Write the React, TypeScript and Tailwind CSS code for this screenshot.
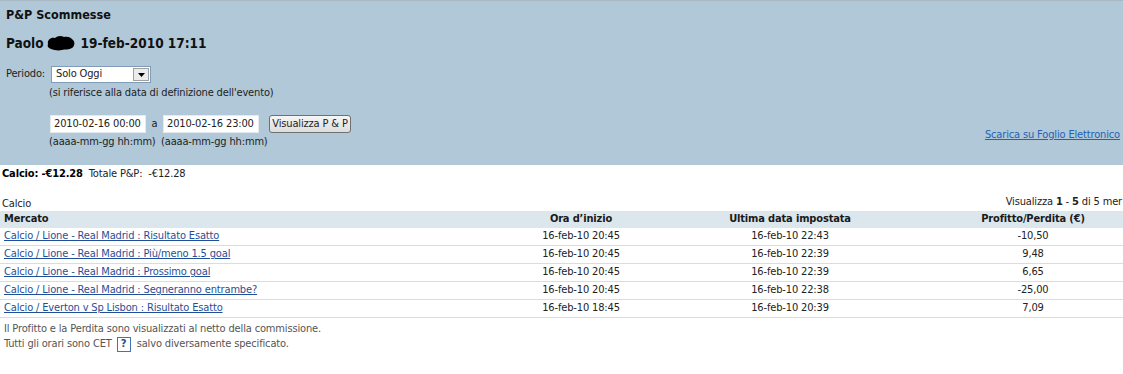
const rows = [
  { m: "Calcio / Lione - Real Madrid : Risultato Esatto", a: "16-feb-10 20:45", b: "16-feb-10 22:43", p: "-10,50" },
  { m: "Calcio / Lione - Real Madrid : Più/meno 1.5 goal", a: "16-feb-10 20:45", b: "16-feb-10 22:39", p: "9,48" },
  { m: "Calcio / Lione - Real Madrid : Prossimo goal", a: "16-feb-10 20:45", b: "16-feb-10 22:39", p: "6,65" },
  { m: "Calcio / Lione - Real Madrid : Segneranno entrambe?", a: "16-feb-10 20:45", b: "16-feb-10 22:38", p: "-25,00" },
  { m: "Calcio / Everton v Sp Lisbon : Risultato Esatto", a: "16-feb-10 18:45", b: "16-feb-10 20:39", p: "7,09" },
];

function Blob() {
  return (
    <svg width="30" height="16" viewBox="0 0 30 16" className="mx-[2px]">
      <path
        d="M2 9 C1 5 5 2 9 3 C11 1 15 0 18 2 C21 1 25 2 27 5 C29 7 29 11 26 13 C23 15 19 14 16 15 C12 16 8 15 5 14 C2 13 1 11 2 9 Z"
        fill="#000"
      />
    </svg>
  );
}

export default function App() {
  return (
    <div className="w-[1123px] h-[374px] overflow-hidden bg-white text-[11px] tracking-[-0.15px] text-[#222] font-['DejaVu_Sans_Condensed','DejaVu_Sans',sans-serif]">
      {/* Blue panel */}
      <div className="h-[165px] bg-[#b0c8d8] border-t border-[#a9b9c4] pl-[6px] pr-[3px] flex flex-col">
        <div className="mt-[6px] h-[16px] leading-[16px] text-[12.5px] font-bold tracking-normal text-[#111]">P&amp;P Scommesse</div>
        <div className="mt-[11px] h-[18px] flex items-center text-[13.5px] font-bold tracking-normal text-[#111]">
          <span>Paolo</span>
          <Blob />
          <span className="ml-[3px]">19-feb-2010 17:11</span>
        </div>
        <div className="mt-[14px] flex items-center h-[17px]">
          <span className="w-[45px]">Periodo:</span>
          <div className="w-[100px] h-[17px] bg-white border border-[#7f9db9] flex items-center justify-between pl-[4px] pr-[1px]">
            <span>Solo Oggi</span>
            <div className="w-[16px] h-[13px] bg-[#ececec] border border-[#a0a0a0] flex items-center justify-center">
              <svg width="7" height="4" viewBox="0 0 7 4"><path d="M0 0 H7 L3.5 4 Z" fill="#000" /></svg>
            </div>
          </div>
        </div>
        <div className="mt-[3px] ml-[43px] h-[14px] leading-[14px]">(si riferisce alla data di definizione dell'evento)</div>
        <div className="mt-[15px] flex justify-between">
          <div className="ml-[44px] flex flex-col">
            <div className="flex items-center h-[18px]">
              <div className="w-[96px] h-[18px] bg-white border border-[#e4eaee] flex items-center pl-[3px]">2010-02-16 00:00</div>
              <span className="w-[17px] text-center">a</span>
              <div className="w-[96px] h-[18px] bg-white border border-[#e4eaee] flex items-center pl-[3px]">2010-02-16 23:00</div>
              <div className="ml-[10px] w-[82px] h-[18px] rounded-[3px] border border-[#707070] bg-gradient-to-b from-[#f6f6f6] to-[#dddddd] flex items-center justify-center">
                Visualizza P &amp; P
              </div>
            </div>
            <div className="mt-[2px] h-[14px] leading-[14px] flex">
              <span className="ml-[-1px] w-[112px]">(aaaa-mm-gg hh:mm)</span>
              <span>(aaaa-mm-gg hh:mm)</span>
            </div>
          </div>
          <a className="self-center mt-[6px] text-[#2462b3] underline">Scarica su Foglio Elettronico</a>
        </div>
      </div>

      {/* Totals */}
      <div className="pl-[2px] h-[16px] mt-[1px] flex items-center">
        <span className="font-bold text-[#000]">Calcio: -€12.28</span>
        <span className="ml-[6px]">Totale P&amp;P: &nbsp;-€12.28</span>
      </div>

      <div className="w-[1123px] mt-[14px] flex items-end justify-between pl-[2px] pr-[1px] h-[15px] leading-[14px]">
        <span className="mt-[2px]">Calcio</span>
        <span className="mb-[2px]">
          Visualizza <b>1</b> - <b>5</b> di 5 mer
        </span>
      </div>

      {/* Table */}
      <div className="w-[1168px]">
        <div className="grid grid-cols-[480px_202px_216px_270px] h-[17px] bg-[#dbe7ed] font-bold text-[#1a1a1a] items-center">
          <div className="pl-[4px]">Mercato</div>
          <div className="text-center">Ora d’inizio</div>
          <div className="text-center">Ultima data impostata</div>
          <div className="text-center">Profitto/Perdita (€)</div>
        </div>
        {rows.map((r) => (
          <div key={r.m} className="grid grid-cols-[480px_202px_216px_270px] h-[18px] border-b border-[#dcdcdc] items-center">
            <div className="pl-[4px]"><a className="text-[#1f4f99] underline">{r.m}</a></div>
            <div className="text-center">{r.a}</div>
            <div className="text-center">{r.b}</div>
            <div className="text-center">{r.p}</div>
          </div>
        ))}
      </div>

      {/* Footer */}
      <div className="pl-[4px] mt-[3px] text-[#555]">
        <div className="h-[15px] leading-[15px]">Il Profitto e la Perdita sono visualizzati al netto della commissione.</div>
        <div className="h-[16px] flex items-center">
          <span>Tutti gli orari sono CET</span>
          <span className="ml-[5px] mr-[6px] w-[14px] h-[15px] border border-[#3f74b5] bg-white flex items-center justify-center font-bold text-[#1f4e8a] text-[11px]">?</span>
          <span>salvo diversamente specificato.</span>
        </div>
      </div>
    </div>
  );
}
